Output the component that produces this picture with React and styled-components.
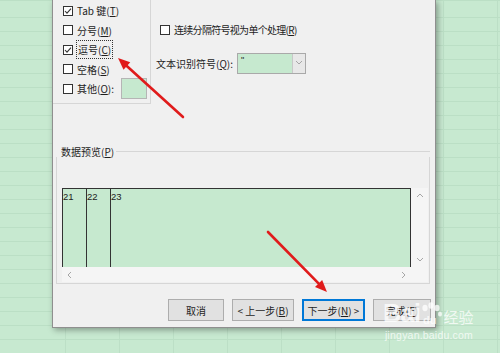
import React from 'react';
import styled, { createGlobalStyle } from 'styled-components';

const Global = createGlobalStyle`
  html, body { margin: 0; padding: 0; }
  body { font-family: "Noto Sans CJK SC", "Liberation Sans", sans-serif; }
`;

const Page = styled.div`
  position: relative;
  width: 500px;
  height: 353px;
  overflow: hidden;
  box-sizing: border-box;
  padding-left: 52px;
  background-color: #c7e9d0;
  background-image:
    repeating-linear-gradient(to bottom, transparent 0 13px, #bbdfc5 13px 14px),
    repeating-linear-gradient(to right, transparent 0 53px, #bcdfc6 53px 54px);
  background-position: 0 4px, 12px 0;
`;

const Dialog = styled.div`
  width: 384px;
  height: 328px;
  box-sizing: border-box;
  background: #f0f0f0;
  border: 1px solid #8f8f8f;
  border-top: none;
  box-shadow: 2px 2px 6px rgba(0, 0, 0, 0.35);
  display: flex;
  flex-direction: column;
  color: #1e1e1e;
  font-size: 10px;
`;

const TopRow = styled.div`
  display: flex;
  height: 104px;
  flex-shrink: 0;
`;

const DelimGroup = styled.div`
  width: 98px;
  height: 104px;
  box-sizing: border-box;
  border-right: 1px solid #d6d6d6;
  border-bottom: 1px solid #d6d6d6;
  padding: 1px 0 0 10px;
  display: flex;
  flex-direction: column;
`;

const CheckRow = styled.label`
  display: flex;
  align-items: center;
  gap: 4px;
  height: 19.5px;
  flex-shrink: 0;
  white-space: nowrap;
  margin-left: ${p => p.$indent || 0}px;
`;

const Box = styled.span`
  width: 10px;
  height: 10px;
  box-sizing: border-box;
  border: 1px solid #333;
  background: #fff;
  display: inline-flex;
  align-items: center;
  justify-content: center;
  flex-shrink: 0;
`;

const Focus = styled.span`
  outline: 1px dotted #333;
  outline-offset: 0px;
  padding: 1px 1px;
`;

const Tight = styled.span`
  letter-spacing: -0.7px;
`;

const OtherField = styled.span`
  width: 26px;
  height: 21px;
  box-sizing: border-box;
  margin-left: 3px;
  border: 1px solid #b5b5b5;
  background: #c6e9cf;
`;

const OptionsCol = styled.div`
  flex: 1;
  display: flex;
  flex-direction: column;
  padding: 20px 0 0 5px;
`;

const QualRow = styled.div`
  display: flex;
  align-items: center;
  height: 21px;
  margin-top: 13px;
`;

const QualLabel = styled.span`
  width: 81px;
  white-space: nowrap;
`;

const Combo = styled.div`
  width: 69px;
  height: 21px;
  box-sizing: border-box;
  border: 1px solid #a9a9a9;
  display: flex;
`;

const ComboField = styled.span`
  flex: 1;
  background: #c6e9cf;
  font-family: "Liberation Sans", sans-serif;
  font-size: 9px;
  line-height: 1;
  padding: 2px 0 0 3px;
`;

const ComboButton = styled.span`
  width: 12px;
  background: #e8e8e8;
  border-left: 1px solid #c8c8c8;
  display: flex;
  align-items: center;
  justify-content: center;
`;

const Group = styled.div`
  margin: 41px 0 0 3px;
  width: 374px;
  display: flex;
  flex-direction: column;
  flex-shrink: 0;
`;

const GroupHeader = styled.div`
  display: flex;
  align-items: center;
  height: 12px;
  padding-left: 5px;
  gap: 2px;
  white-space: nowrap;
`;

const GroupLine = styled.span`
  flex: 1;
  height: 1px;
  background: #d6d6d6;
`;

const GroupBody = styled.div`
  height: 127px;
  box-sizing: border-box;
  border: 1px solid #d6d6d6;
  border-top: none;
  padding: 31px 0 0 5px;
`;

const Preview = styled.div`
  display: grid;
  grid-template-columns: 349px 17px;
  grid-template-rows: 79px 15px;
`;

const DataArea = styled.div`
  background: #c6e9cf;
  border: 1px solid #333;
  border-bottom: none;
  display: flex;
  font-family: "Liberation Sans", sans-serif;
  font-size: 9.5px;
  color: #222;
`;

const Cell = styled.div`
  width: ${p => (p.$w ? `${p.$w}px` : 'auto')};
  flex: ${p => (p.$w ? 'none' : 1)};
  border-right: ${p => (p.$w ? '1px solid #333' : 'none')};
  padding: 3px 0 0 0;
  line-height: 1;
`;

const VScroll = styled.div`
  background: #f5f5f5;
  display: flex;
  flex-direction: column;
  justify-content: space-between;
  align-items: center;
  padding: 4px 0 3px;
`;

const HScroll = styled.div`
  background: #f5f5f5;
  display: flex;
  justify-content: space-between;
  align-items: center;
  padding: 0 4px 0 4px;
`;

const Corner = styled.div`
  background: #f5f5f5;
`;

const ButtonRow = styled.div`
  display: flex;
  gap: 8px;
  margin-top: 15px;
  padding-left: 115px;
  flex-shrink: 0;
`;

const Button = styled.div`
  width: ${p => p.$w}px;
  height: 22px;
  box-sizing: border-box;
  background: #e1e1e1;
  border: 1px solid ${p => (p.$primary ? '#0078d7' : '#adadad')};
  box-shadow: ${p => (p.$primary ? 'inset 0 0 0 1px #0078d7' : 'none')};
  display: flex;
  align-items: center;
  justify-content: center;
  white-space: nowrap;
  font-size: 10px;
`;

const Overlay = styled.svg`
  position: absolute;
  left: 0;
  top: 0;
  width: 500px;
  height: 353px;
  pointer-events: none;
`;

const Watermark = styled.div`
  position: absolute;
  left: 383px;
  top: 301px;
  color: rgba(255, 255, 255, 0.75);
  display: flex;
  flex-direction: column;
  pointer-events: none;
`;

const MarkTop = styled.div`
  display: flex;
  align-items: flex-end;
`;

const MarkBai = styled.span`
  font-family: "Liberation Sans", sans-serif;
  font-size: 25px;
  line-height: 1;
  font-weight: 700;
  letter-spacing: -0.5px;
`;

const MarkJy = styled.span`
  font-size: 15px;
  line-height: 1;
  margin-left: 1px;
  padding-bottom: 2px;
`;

const MarkUrl = styled.span`
  font-family: "Liberation Sans", sans-serif;
  font-size: 10.5px;
  line-height: 1;
  margin: 4px 0 0 2px;
  letter-spacing: 0.2px;
  color: rgba(255, 255, 255, 0.75);
`;

const Check = ({ on }) => (
  <Box>
    {on && (
      <svg width="8" height="8" viewBox="0 0 8 8">
        <polyline points="1,4 3,6.2 7,1.6" fill="none" stroke="#333" strokeWidth="1.1" />
      </svg>
    )}
  </Box>
);

const Chevron = ({ dir }) => {
  const pts = {
    up: '1,5 4,2 7,5',
    down: '1,2 4,5 7,2',
    left: '5,1 2,4 5,7',
    right: '3,1 6,4 3,7',
  }[dir];
  return (
    <svg width="8" height="8" viewBox="0 0 8 8">
      <polyline points={pts} fill="none" stroke="#a6a6a6" strokeWidth="1" />
    </svg>
  );
};

const Arrow = ({ x1, y1, x2, y2 }) => {
  const dx = x2 - x1;
  const dy = y2 - y1;
  const len = Math.hypot(dx, dy);
  const ux = dx / len;
  const uy = dy / len;
  const bx = x2 - 12 * ux;
  const by = y2 - 12 * uy;
  const nx = -uy * 5;
  const ny = ux * 5;
  return (
    <g>
      <line x1={x1} y1={y1} x2={bx + ux * 2} y2={by + uy * 2} stroke="#e01b1b" strokeWidth="2.6" strokeLinecap="round" />
      <polygon points={`${x2},${y2} ${bx + nx},${by + ny} ${bx - nx},${by - ny}`} fill="#e01b1b" />
    </g>
  );
};

const Paw = () => (
  <svg width="22" height="24" viewBox="0 0 22 24">
    <g fill="rgba(255,255,255,0.75)">
      <ellipse cx="5" cy="6" rx="2.6" ry="3.2" />
      <ellipse cx="11" cy="3.5" rx="2.6" ry="3.2" />
      <ellipse cx="17" cy="6" rx="2.6" ry="3.2" />
      <ellipse cx="20" cy="12" rx="2" ry="2.6" />
    </g>
    <text x="3" y="22" fontFamily="Liberation Sans, sans-serif" fontSize="11" fontWeight="700" fill="rgba(255,255,255,0.75)">du</text>
  </svg>
);

export default function App() {
  return (
    <>
      <Global />
      <Page>
        <Dialog>
          <TopRow>
            <DelimGroup>
              <CheckRow>
                <Check on />
                <span>Tab 键(<u>T</u>)</span>
              </CheckRow>
              <CheckRow>
                <Check />
                <span>分号(<u>M</u>)</span>
              </CheckRow>
              <CheckRow>
                <Check on />
                <Focus>逗号(<u>C</u>)</Focus>
              </CheckRow>
              <CheckRow>
                <Check />
                <span>空格(<u>S</u>)</span>
              </CheckRow>
              <CheckRow>
                <Check />
                <span>其他(<u>O</u>):</span>
                <OtherField />
              </CheckRow>
            </DelimGroup>
            <OptionsCol>
              <CheckRow $indent={4}>
                <Check />
                <Tight>连续分隔符号视为单个处理(<u>R</u>)</Tight>
              </CheckRow>
              <QualRow>
                <QualLabel>文本识别符号(<u>Q</u>):</QualLabel>
                <Combo>
                  <ComboField>"</ComboField>
                  <ComboButton>
                    <Chevron dir="down" />
                  </ComboButton>
                </Combo>
              </QualRow>
            </OptionsCol>
          </TopRow>

          <Group>
            <GroupHeader>
              <span>数据预览(<u>P</u>)</span>
              <GroupLine />
            </GroupHeader>
            <GroupBody>
              <Preview>
                <DataArea>
                  <Cell $w={23}>21</Cell>
                  <Cell $w={23}>22</Cell>
                  <Cell>23</Cell>
                </DataArea>
                <VScroll>
                  <Chevron dir="up" />
                  <Chevron dir="down" />
                </VScroll>
                <HScroll>
                  <Chevron dir="left" />
                  <Chevron dir="right" />
                </HScroll>
                <Corner />
              </Preview>
            </GroupBody>
          </Group>

          <ButtonRow>
            <Button $w={56}>取消</Button>
            <Button $w={62}>&lt; 上一步(<u>B</u>)</Button>
            <Button $w={63} $primary>下一步(<u>N</u>) &gt;</Button>
            <Button $w={58}>完成(<u>F</u>)</Button>
          </ButtonRow>
        </Dialog>

        <Overlay viewBox="0 0 500 353">
          <Arrow x1={183} y1={117} x2={118} y2={58} />
          <Arrow x1={268} y1={232} x2={327} y2={292} />
        </Overlay>

        <Watermark>
          <MarkTop>
            <MarkBai>Bai</MarkBai>
            <Paw />
            <MarkJy>经验</MarkJy>
          </MarkTop>
          <MarkUrl>jingyan.baidu.com</MarkUrl>
        </Watermark>
      </Page>
    </>
  );
}
